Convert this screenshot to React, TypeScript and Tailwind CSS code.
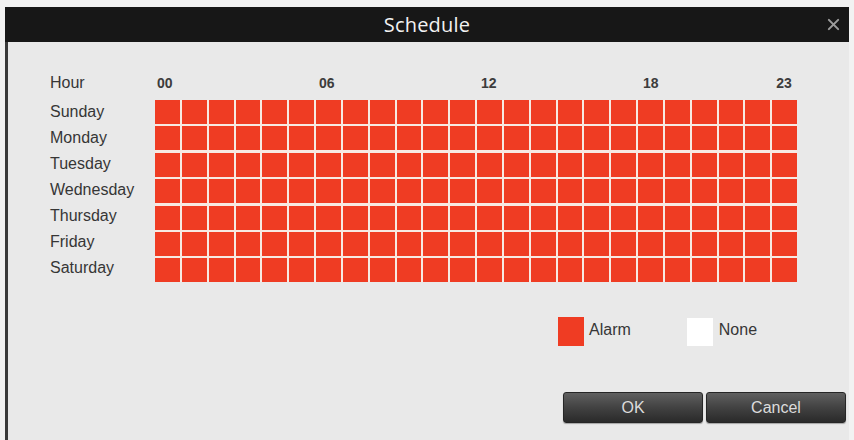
import React from "react";

const DAYS = ["Sunday", "Monday", "Tuesday", "Wednesday", "Thursday", "Friday", "Saturday"];
const HOURS = Array.from({ length: 24 }, (_, i) => i);

// hour ticks shown over the grid, keyed by column
const TICKS: Record<number, { label: string; cls: string }> = {
  0: { label: "00", cls: "pl-[2px]" },
  6: { label: "06", cls: "pl-[3px]" },
  12: { label: "12", cls: "pl-[4px]" },
  18: { label: "18", cls: "pl-[5px]" },
  23: { label: "23", cls: "pl-[4px]" },
};

const font = "font-['Liberation_Sans',Arial,sans-serif]";

const CloseIcon = () => (
  <svg width="13" height="13" viewBox="0 0 14 14" className="text-[#9c9c9c]">
    <path d="M2 2L12 12M12 2L2 12" stroke="currentColor" strokeWidth="2.2" strokeLinecap="round" />
  </svg>
);

const DialogButton: React.FC<{ label: string }> = ({ label }) => (
  <button
    className={`w-[140px] h-[31px] rounded-[3px] border border-[#262626] bg-gradient-to-b from-[#606060] via-[#424242] to-[#2a2a2a] text-[16px] text-[#dcdcdc] shadow-[0_1px_1px_rgba(0,0,0,0.3)] ${font}`}
  >
    {label}
  </button>
);

export default function App() {
  return (
    <div className="w-[854px] h-[440px] bg-[#f2f2f2] pt-[7px] pl-[5px] pr-[5px] overflow-hidden">
      <div className="flex flex-col h-[433px]">
        {/* title bar */}
        <div className="h-[35px] bg-[#171717] flex items-center justify-center relative shrink-0">
          <span className="text-[20px] text-[#f2f2f2] font-['Open_Sans',sans-serif] tracking-[0.2px] leading-none">
            Schedule
          </span>
          <div className="absolute right-[9px] top-[11px]">
            <CloseIcon />
          </div>
        </div>

        {/* body */}
        <div className={`flex-1 bg-[#e9e9e9] border-l-[3px] border-[#3a3a3a] pl-[42px] pt-[31px] text-[#363636] ${font}`}>
          {/* hour header */}
          <div className="flex h-[20px] items-center mb-[7px]">
            <div className="w-[105px] text-[16px]">Hour</div>
            <div className="w-[642px] grid grid-cols-[repeat(24,minmax(0,1fr))] gap-[2px]">
              {HOURS.map((h) => (
                <div key={h} className={`text-[14px] font-bold text-[#3c3c3c] whitespace-nowrap ${TICKS[h]?.cls ?? ""}`}>
                  {TICKS[h]?.label ?? ""}
                </div>
              ))}
            </div>
          </div>

          {/* schedule grid */}
          <div className="flex">
            <div className="w-[105px] flex flex-col gap-[2px]">
              {DAYS.map((d) => (
                <div key={d} className="h-[24px] flex items-center text-[16px] leading-none">
                  {d}
                </div>
              ))}
            </div>
            <div className="w-[642px] grid grid-cols-[repeat(24,minmax(0,1fr))] gap-x-[2px] gap-y-[2.4px] bg-[#f7e9e3]">
              {DAYS.map((d) =>
                HOURS.map((h) => <div key={`${d}-${h}`} className="h-[24px] bg-[#ef3c23]" />)
              )}
            </div>
          </div>

          {/* legend */}
          <div className="flex items-center mt-[35px] pl-[508px] h-[29px]">
            <div className="w-[26px] h-[29px] bg-[#ef3c23]" />
            <span className="ml-[5px] text-[16px] -mt-[4px]">Alarm</span>
            <div className="w-[26px] h-[28px] bg-white ml-[56px]" />
            <span className="ml-[6px] text-[16px] -mt-[4px]">None</span>
          </div>

          {/* actions */}
          <div className="flex mt-[46px] pl-[513px] gap-[3px]">
            <DialogButton label="OK" />
            <DialogButton label="Cancel" />
          </div>
        </div>
      </div>
    </div>
  );
}
